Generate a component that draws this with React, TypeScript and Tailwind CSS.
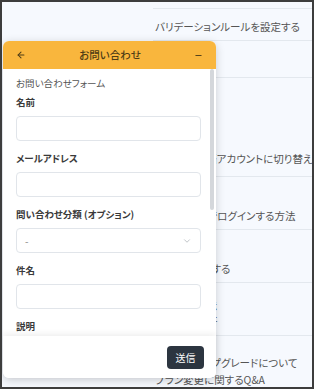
import { ArrowLeft, Minus, ChevronDown } from 'lucide-react'

type Item = { title: string; sub?: string }

const items: Item[] = [
  { title: '' },
  { title: 'バリデーションルールを設定する' },
  { title: 'フォーム項目' },
  { title: '言語設定', sub: '日本語と英語アカウントに切り替える方法' },
  { title: 'ログイン設定', sub: '二段階認証でログインする方法' },
  { title: 'サービス連携', sub: 'Slackと連携する' },
  { title: 'お支払い方法', sub: '請求書の発行' },
  { title: 'プランのアップグレードについて', sub: 'プラン変更に関するQ&A' },
]

function Field({ label, select }: { label: string; select?: boolean }) {
  return (
    <div className="flex flex-col">
      <label className="text-[9.5px] leading-[12px] font-bold text-[#3a3a3a] mb-[8px]">{label}</label>
      {select ? (
        <div className="h-[25px] rounded-[4px] border border-[#e1e5ea] bg-white flex items-center justify-between pl-[8px] pr-[8px]">
          <span className="text-[10px] text-[#888]">-</span>
          <ChevronDown size={10} strokeWidth={1.5} className="text-[#9aa0a6]" />
        </div>
      ) : (
        <div className="h-[25px] rounded-[4px] border border-[#e1e5ea] bg-white" />
      )}
    </div>
  )
}

export default function App() {
  return (
    <div className="relative w-[314px] h-[389px] overflow-hidden border-2 border-[#3d3d3d] bg-[#f6f9fe] font-['Noto_Sans_CJK_JP',sans-serif] [font-feature-settings:'palt']">
      <div className="flex">
        <div className="w-[151px] shrink-0" />
        <div className="flex-1 flex flex-col text-[10.5px] text-[#555]">
          {items.map((it, i) => {
            const h =
              i === 0
                ? 'h-[7px]'
                : i === 1
                  ? 'h-[32px] pt-[9px]'
                  : i === 2
                    ? 'h-[37px] pt-[11px]'
                    : i === 3
                      ? 'h-[99px] pt-[55px]'
                      : i === 7
                        ? 'h-[53px] pt-[18px]'
                        : 'h-[53px] pt-[13px]'
            return (
              <div key={i} className={`flex flex-col border-b border-[#e3e8ee] pl-[2px] ${h} overflow-hidden whitespace-nowrap`}>
                {it.title && <span className="leading-[17px]">{it.title}</span>}
                {it.sub && <span className="leading-[17px]">{it.sub}</span>}
              </div>
            )
          })}
        </div>
      </div>

      <div className="absolute left-[1px] top-[39px] w-[213px] h-[337px] flex flex-col rounded-[6px] bg-white shadow-[0_2px_10px_rgba(0,0,0,0.18)]">
        <div className="h-[28px] shrink-0 flex items-center justify-between px-[13px] rounded-t-[6px] bg-[#f9b63d] text-[#4d3c16]">
          <ArrowLeft size={10} strokeWidth={2.5} />
          <span className="text-[10.5px] font-medium">お問い合わせ</span>
          <Minus size={9} strokeWidth={2.5} />
        </div>

        <div className="flex-1 flex min-h-0">
          <div className="flex-1 overflow-hidden pl-[13px] pr-[9px] pt-[8px]">
            <p className="text-[9.5px] leading-[12px] text-[#555] mb-[7px]">お問い合わせフォーム</p>
            <div className="flex flex-col gap-[11px]">
              <Field label="名前" />
              <Field label="メールアドレス" />
              <Field label="問い合わせ分類 (オプション)" select />
              <Field label="件名" />
              <Field label="説明" />
            </div>
          </div>
          <div className="w-[4px] mr-[2px] shrink-0">
            <div className="h-[141px] rounded-full bg-[#d4d7db]" />
          </div>
        </div>

        <div className="h-[42px] shrink-0 flex items-center justify-end pr-[12px] rounded-b-[6px] bg-white shadow-[0_-2px_6px_rgba(0,0,0,0.07)]">
          <button className="w-[37px] h-[23px] rounded-[4px] bg-[#2c3540] text-white text-[10px]">送信</button>
        </div>
      </div>
    </div>
  )
}
